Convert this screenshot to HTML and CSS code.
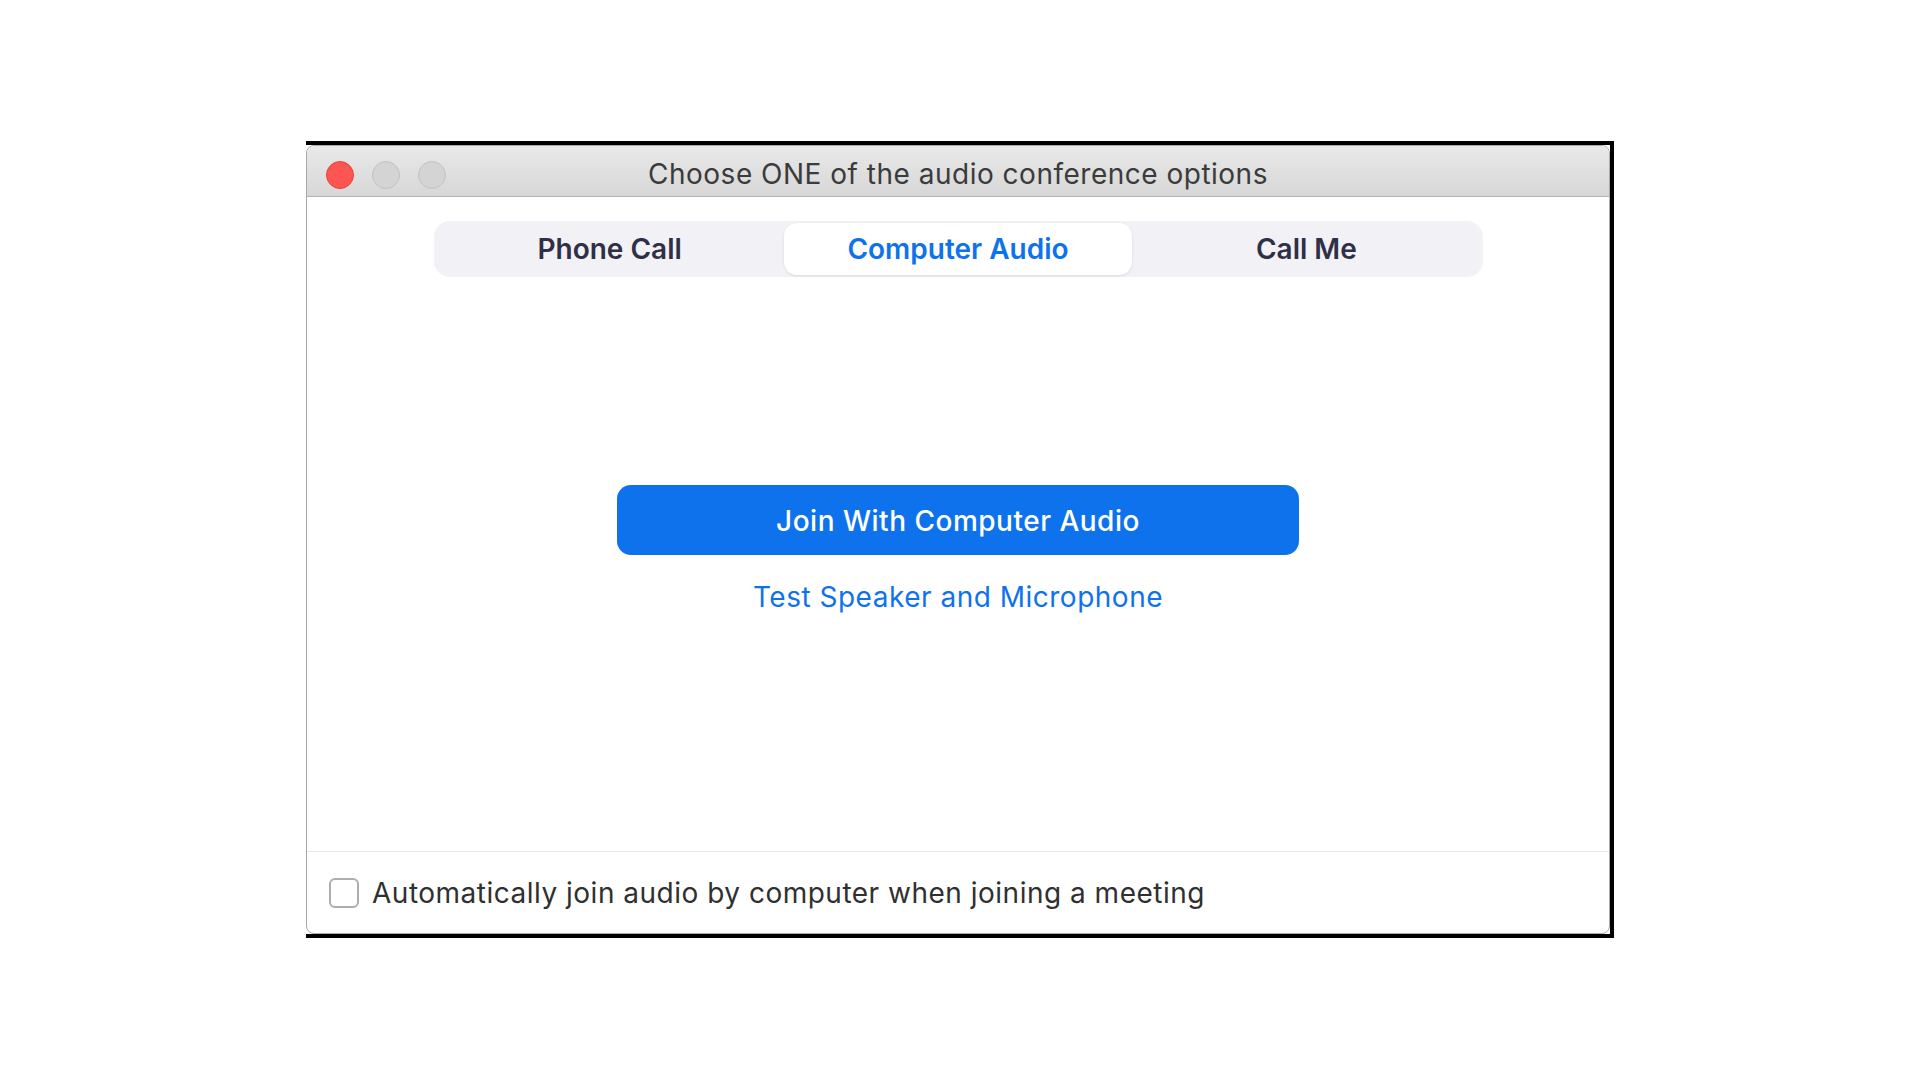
FILE: index.html
```html
<!DOCTYPE html>
<html>
<head>
    <meta charset="utf-8" />
    <title>Choose ONE of the audio conference options</title>
    <link rel="stylesheet" href="styles.css">
</head>
<body>
    <div class="frame">
        <div class="window">
            <div class="titlebar">
                <div class="lights">
                    <span class="light close"></span>
                    <span class="light"></span>
                    <span class="light"></span>
                </div>
                <div class="title">Choose ONE of the audio conference options</div>
                <div></div>
            </div>

            <div class="content">
                <div class="tabs">
                    <div class="tab">Phone Call</div>
                    <div class="tab active">Computer Audio</div>
                    <div class="tab">Call Me</div>
                </div>

                <button class="join">Join With Computer Audio</button>
                <a class="test-link" href="#">Test Speaker and Microphone</a>
            </div>

            <div class="footer">
                <span class="checkbox"></span>
                <span class="label">Automatically join audio by computer when joining a meeting</span>
            </div>
        </div>
    </div>
</body>
</html>
```

FILE: styles.css
```css
body {
    margin: 0;
    background: #fff;
    font-family: Inter, "Liberation Sans", Arial, sans-serif;
}
.frame {
    width: 1304px;
    margin: 141px 0 0 306px;
    border-top: 4px solid #000;
    border-right: 4px solid #000;
    border-bottom: 4px solid #000;
}
.window {
    height: 787px;
    border: 1px solid #a9a9a9;
    border-radius: 8px;
    overflow: hidden;
    display: flex;
    flex-direction: column;
    background: #fff;
}
.titlebar {
    height: 50px;
    border-bottom: 1px solid #b3b3b3;
    background: linear-gradient(#e9e9e9, #d7d7d7);
    display: grid;
    grid-template-columns: 1fr auto 1fr;
    align-items: center;
}
.lights {
    display: flex;
    gap: 18px;
    padding-left: 19px;
    padding-top: 7px;
}
.light {
    width: 26px;
    height: 26px;
    border-radius: 50%;
    background: #d4d4d4;
    border: 1px solid #c2c2c2;
}
.light.close {
    background: #fd5552;
    border-color: #e2463f;
}
.title {
    font-size: 28px;
    letter-spacing: 0.5px;
    color: #3b3b3b;
    padding-top: 6px;
}
.content {
    flex: 1;
    display: flex;
    flex-direction: column;
    align-items: center;
}
.tabs {
    margin-top: 24px;
    width: 1045px;
    height: 52px;
    padding: 2px;
    background: #f2f2f6;
    border-radius: 16px;
    display: grid;
    grid-template-columns: 1fr 1fr 1fr;
}
.tab {
    display: flex;
    align-items: center;
    justify-content: center;
    font-size: 28px;
    font-weight: 600;
    color: #2f3046;
    border-radius: 13px;
}
.tab.active {
    background: #fff;
    color: #0e72ed;
    box-shadow: 0 1px 3px rgba(0,0,0,0.1);
}
.join {
    margin-top: 208px;
    width: 682px;
    height: 70px;
    padding-top: 3px;
    border: none;
    border-radius: 14px;
    background: #0e72ed;
    color: #fff;
    font-family: inherit;
    font-size: 28px;
    font-weight: 500;
    letter-spacing: 0.5px;
}
.test-link {
    margin-top: 25px;
    line-height: 34px;
    font-size: 28px;
    letter-spacing: 0.5px;
    color: #0e72ed;
    text-decoration: none;
}
.footer {
    height: 81px;
    border-top: 1px solid #e6e8ee;
    display: flex;
    align-items: center;
    padding-left: 22px;
    gap: 13px;
}
.checkbox {
    width: 26px;
    height: 26px;
    border: 2px solid #adadad;
    border-radius: 6px;
}
.label {
    font-size: 28px;
    letter-spacing: 0.5px;
    color: #303030;
}
```
